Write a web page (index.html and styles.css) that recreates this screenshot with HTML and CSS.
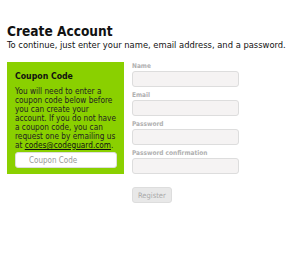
FILE: index.html
```html
<!DOCTYPE html>
<html lang="en">
<head>
    <meta charset="UTF-8">
    <title>Create Account</title>
    <link rel="stylesheet" href="styles.css">
</head>
<body>
    <div class="page">
        <h1>Create Account</h1>
        <p class="intro">To continue, just enter your name, email address, and a password.</p>

        <div class="columns">
            <div class="coupon-box">
                <h3>Coupon Code</h3>
                <p>You will need to enter a coupon code below before you can create your account. If you do not have a coupon code, you can request one by emailing us at <a href="#">codes@codeguard.com</a>.</p>
                <input type="text" class="coupon-input" placeholder="Coupon Code">
            </div>

            <form class="signup-form">
                <label>Name</label>
                <input type="text">
                <label>Email</label>
                <input type="email">
                <label>Password</label>
                <input type="password">
                <label>Password confirmation</label>
                <input type="password">
                <button type="submit">Register</button>
            </form>
        </div>
    </div>
</body>
</html>
```

FILE: styles.css
```css
body {
    margin: 0;
    font-family: "DejaVu Sans Condensed", "DejaVu Sans", sans-serif;
    font-stretch: condensed;
    color: #111;
    background: #fff;
}
.page {
    padding: 23px 7px 0 7px;
}
h1 {
    margin: 0;
    font-size: 13.6px;
    line-height: 16px;
    font-weight: bold;
}
.intro {
    margin: 0;
    font-size: 9.3px;
    line-height: 12px;
}
.columns {
    display: flex;
    align-items: flex-start;
    gap: 8px;
    margin-top: 11px;
}
.coupon-box {
    width: 101px;
    padding: 9px 8px 6px 8px;
    background: #8ad000;
    flex-shrink: 0;
}
.coupon-box h3 {
    margin: 0 0 6px 0;
    font-size: 8.7px;
    line-height: 10px;
    font-weight: bold;
}
.coupon-box p {
    margin: 0;
    font-size: 8.2px;
    line-height: 9px;
    color: #222;
}
.coupon-box a {
    color: #111;
}
.coupon-input {
    display: block;
    box-sizing: border-box;
    width: 102px;
    height: 16px;
    margin-top: 2px;
    padding: 0 13px;
    border: 1px solid #ddd;
    border-radius: 3px;
    background: #fff;
    font-family: inherit;
    font-stretch: condensed;
    font-size: 8px;
}
.coupon-input::placeholder {
    color: #999;
}
.signup-form {
    display: flex;
    flex-direction: column;
    align-items: flex-start;
}
.signup-form label {
    font-size: 6.5px;
    line-height: 9px;
    font-weight: bold;
    color: #b0b0b0;
}
.signup-form input {
    box-sizing: border-box;
    width: 107px;
    height: 16px;
    margin: 0 0 4px 0;
    border: 1px solid #ddd;
    border-radius: 3px;
    background: #f5f3f3;
}
.signup-form button {
    margin-top: 9px;
    height: 16px;
    padding: 0 5px;
    font-family: inherit;
    font-stretch: condensed;
    font-size: 7.5px;
    color: #aaa;
    background: #e8e8e8;
    border: 1px solid #ddd;
    border-radius: 3px;
}
```
